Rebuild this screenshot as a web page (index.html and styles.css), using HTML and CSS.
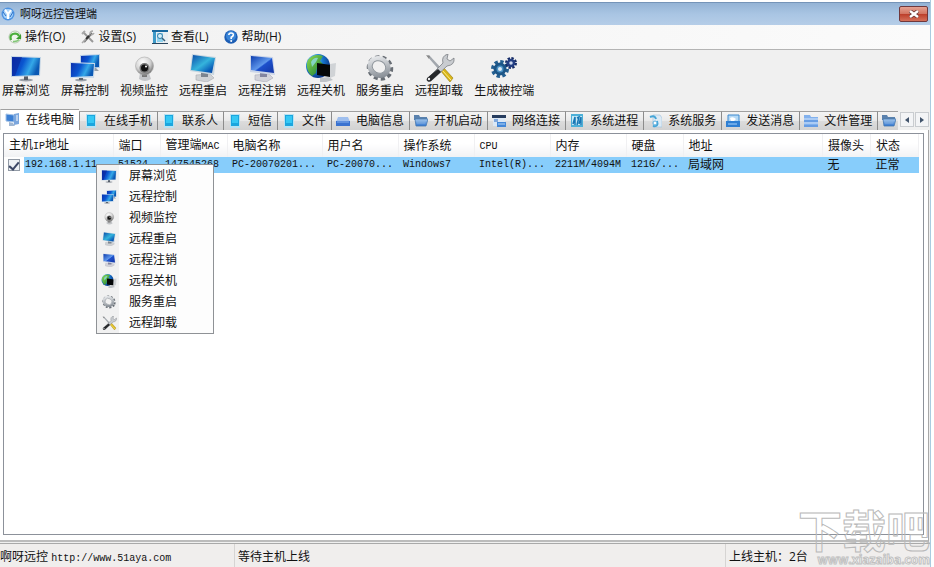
FILE: index.html
```html
<!DOCTYPE html>
<html lang="zh-CN">
<head>
<meta charset="utf-8">
<title>啊呀远控管理端</title>
<link rel="stylesheet" href="styles.css">
</head>
<body>
<svg class="defs" aria-hidden="true">
  <defs>
    <linearGradient id="screen" x1="0" y1="0" x2="1" y2="0.3">
      <stop offset="0" stop-color="#0b2fae"/><stop offset="0.45" stop-color="#0a56d0"/><stop offset="0.75" stop-color="#35a8e8"/><stop offset="1" stop-color="#0b59b4"/>
    </linearGradient>
    <linearGradient id="aqua" x1="0" y1="0" x2="1" y2="1">
      <stop offset="0" stop-color="#0a4aa8"/><stop offset="0.5" stop-color="#35b4dc"/><stop offset="0.8" stop-color="#0b60ba"/><stop offset="1" stop-color="#0a3d98"/>
    </linearGradient>
    <linearGradient id="royal" x1="0" y1="0" x2="1" y2="1">
      <stop offset="0" stop-color="#0c3cae"/><stop offset="0.5" stop-color="#5f98ec"/><stop offset="0.55" stop-color="#1d50cc"/><stop offset="1" stop-color="#1436a4"/>
    </linearGradient>
    <radialGradient id="ball" cx="0.4" cy="0.3" r="0.7">
      <stop offset="0" stop-color="#fff"/><stop offset="0.6" stop-color="#d4d4d4"/><stop offset="1" stop-color="#777"/>
    </radialGradient>
    <radialGradient id="earth" cx="0.3" cy="0.3" r="0.8">
      <stop offset="0" stop-color="#8be8f4"/><stop offset="0.5" stop-color="#1676cf"/><stop offset="1" stop-color="#0a2b79"/>
    </radialGradient>
    <linearGradient id="land" x1="0" y1="0" x2="1" y2="1">
      <stop offset="0" stop-color="#8fdc50"/><stop offset="1" stop-color="#167a35"/>
    </linearGradient>
    <linearGradient id="steel" x1="0" y1="0" x2="1" y2="1">
      <stop offset="0" stop-color="#eef0f2"/><stop offset="1" stop-color="#7f868e"/>
    </linearGradient>
    <linearGradient id="folder" x1="0" y1="0" x2="0" y2="1">
      <stop offset="0" stop-color="#a9cbf0"/><stop offset="1" stop-color="#2f74cf"/>
    </linearGradient>
    <symbol id="i-monitor" viewBox="0 0 32 28">
      <ellipse cx="16" cy="26" rx="7" ry="1.500" fill="#9aa0a8"/><path d="M14 22h4v4h-4z" fill="#555d68"/>
      <path d="M1 2 31 3 30 22 1 23z" fill="#c2d4e4"/><path d="M2 3 30 4 29 21 2 22z" fill="url(#screen)"/>
      <path d="M2 3h10L5 22H2z" fill="#0a259b" opacity=".6"/>
    </symbol>
    <symbol id="i-dual" viewBox="0 0 32 28">
      <path d="M11 1 31 0 31 14 11 15z" fill="#bfd4e8"/><path d="M12 2 30 1 30 13 12 14z" fill="url(#screen)"/><path d="M22 14h5l3 3h-8z" fill="#98a1ab"/>
      <ellipse cx="12" cy="26" rx="6" ry="1.500" fill="#9aa0a8"/><path d="M10 22h4v4h-4z" fill="#5b6470"/>
      <path d="M1 8 26 9 25 24 1 24z" fill="#cbdcec"/><path d="M2 9 25 10 24 22 2 23z" fill="url(#screen)"/>
    </symbol>
    <symbol id="i-webcam" viewBox="0 0 32 28">
      <path d="M12 19h9l2 6q-6 4-12 0z" fill="#c3c5c8"/><path d="M14 20h5v3h-5z" fill="#777"/>
      <circle cx="16.500" cy="12" r="9" fill="url(#ball)" stroke="#aaa" stroke-width=".6"/>
      <circle cx="16.500" cy="14" r="5" fill="#777"/><circle cx="16.500" cy="14" r="3.500" fill="#111"/><circle cx="18" cy="12.500" r="1" fill="#fff"/>
    </symbol>
    <symbol id="i-restart" viewBox="0 0 32 28">
      <path d="M9 21 23 20 27 24 20 28 9 26z" fill="#cfd2d5" stroke="#a8abb0" stroke-width=".6"/><path d="M14 18h7v5h-7z" fill="#7c858f"/>
      <path d="M5 0 29 3 27 21 3 17z" fill="#c8d6e0"/><path d="M6 1 28 4 25 19 4 16z" fill="url(#aqua)"/>
    </symbol>
    <symbol id="i-logoff" viewBox="0 0 32 28">
      <path d="M9 21 23 20 27 24 20 28 9 26z" fill="#d3d3da" stroke="#aaa9b8" stroke-width=".6"/><path d="M14 18h7v5h-7z" fill="#8385a0"/>
      <path d="M4 1 27 3 29 21 4 18z" fill="#ccd5e8"/><path d="M5 2 26 4 28 19 5 16z" fill="url(#royal)"/>
    </symbol>
    <symbol id="i-globe" viewBox="0 0 32 28">
      <circle cx="13" cy="12" r="12" fill="url(#earth)"/>
      <path d="M3 6Q9-1 18 2L15 7 18 10 12 13 11 19 7 22Q1 17 2 9z" fill="url(#land)"/><path d="M6 8Q9 3 13 4L11 8 7 13z" fill="#8fdbe4" opacity=".8"/>
      <path d="M12 9 26 11 25 23 12 21z" fill="#050708"/><path d="M25 10 31 9 30 22 25 24z" fill="#d0d3d6"/>
      <path d="M15 24 24 23 28 26 21 28 15 28z" fill="#bfc3c7"/>
    </symbol>
    <symbol id="i-gear" viewBox="0 0 32 28">
      <ellipse cx="16" cy="14" rx="11.500" ry="10.500" transform="rotate(30 16 14)" fill="none" stroke="#686e75" stroke-width="4" stroke-dasharray="4 2.900"/>
      <ellipse cx="15" cy="13" rx="9.500" ry="8.500" transform="rotate(30 15 13)" fill="none" stroke="url(#steel)" stroke-width="4.500"/>
      <ellipse cx="15" cy="13" rx="7" ry="6" transform="rotate(30 15 13)" fill="none" stroke="#8e959c" stroke-width="1"/>
    </symbol>
    <symbol id="i-tools" viewBox="0 0 32 28">
      <path d="M4 2 6 1 19 15 17 17z" fill="#a2a7ad"/><path d="M3 1 7 2 6 5z" fill="#888"/>
      <path d="M17 16 20 13 30 24 27 28z" fill="#d9b51a" stroke="#92780b" stroke-width=".6"/><path d="M19 16 28 26" stroke="#fff08a"/>
      <path d="M20 9Q18 2 25 0L24 5 27 7 31 4Q32 11 24 12L8 27Q4 29 4 25z" fill="#c9ccd0" stroke="#7b7f84" stroke-width=".8"/>
      <path d="M15 15 18 18 8 27Q3 29 4 24z" fill="#25272a"/><circle cx="6" cy="25" r="1.200" fill="#eee"/>
    </symbol>
    <symbol id="i-gears" viewBox="0 0 32 28">
      <circle cx="12" cy="15" r="7" fill="none" stroke="#245f91" stroke-width="4" stroke-dasharray="3.200 2.300"/><circle cx="12" cy="15" r="5" fill="#4b91c4" stroke="#1d5687" stroke-width="3"/><circle cx="12" cy="15" r="2" fill="#dcebf6"/>
      <circle cx="23" cy="9" r="4.500" fill="none" stroke="#172c66" stroke-width="3" stroke-dasharray="2.200 1.300"/><circle cx="23" cy="9" r="3" fill="#cdd9ef" stroke="#243f83" stroke-width="2.500"/>
    </symbol>
    <symbol id="i-app" viewBox="0 0 14 14">
      <circle cx="7" cy="7" r="6.500" fill="#4d93e2"/><circle cx="7" cy="7" r="5" fill="#a8d3fa"/><path d="M4 2.500 7 7 10 3M7 7v5" stroke="#fff" stroke-width="2" fill="none"/><path d="M2 5 5 9M12 5 9 10" stroke="#2d6fc4" fill="none"/>
    </symbol>
    <symbol id="i-refresh" viewBox="0 0 14 14">
      <circle cx="7" cy="7" r="6" fill="#eef5eb" stroke="#b7c9b1"/><path d="M3 10Q1 4 7 3.500 10 3.500 11 6" fill="none" stroke="#4bae3b" stroke-width="2.200"/><path d="M13 4v5H8z" fill="#3d9c31"/><path d="M5 11.500Q9 12 11 9.500" fill="none" stroke="#83c777" stroke-width="1.500"/>
    </symbol>
    <symbol id="i-wrench" viewBox="0 0 14 14">
      <path d="M2 2 12 12" stroke="#999" stroke-width="2"/><path d="M1 4 4 1" stroke="#aaa" stroke-width="2"/><path d="M3 12 11 3" stroke="#777" stroke-width="2"/><path d="M5 9 8 6" stroke="#333" stroke-width="2"/><path d="M9 4Q9 1 12 1M13 3Q12 5 10 5M1 13 5 9" stroke="#aaa" stroke-width="1.600" fill="none"/>
    </symbol>
    <symbol id="i-view" viewBox="0 0 16 14">
      <path d="M0 0h16v14H0z" fill="#e9eef2"/><path d="M0 0h16v2H0z" fill="#19689f"/><path d="M1 2h3v11H1z" fill="#3e9ac8"/><path d="M5 3h6v9H5z" fill="#8fd2ee"/><circle cx="8" cy="6" r="2.500" fill="#d5f1fa" stroke="#347ca8"/><path d="M10 8 13 11" stroke="#39607b" stroke-width="1.500"/><path d="M0 13h16v1H0z" fill="#28455d"/>
    </symbol>
    <symbol id="i-help" viewBox="0 0 14 14">
      <circle cx="7" cy="7" r="6.700" fill="#1d5eb4"/><circle cx="7" cy="6" r="5" fill="#3b86d8"/><path d="M4.800 5Q5 3 7 3 9.500 3 9.300 5 9 6.500 7.200 7.300V9" fill="none" stroke="#fff" stroke-width="1.600"/><circle cx="7.200" cy="11" r="1" fill="#fff"/>
    </symbol>
    <symbol id="i-pc" viewBox="0 0 16 14">
      <path d="M1 1 9 2 9 9 1 8z" fill="#3b7fd4" stroke="#a5c3e6"/><path d="M9 1 14 0 14 11 9 12z" fill="#7ba6dd"/><path d="M11 3h2M11 5h2M11 7h2" stroke="#fff"/><path d="M4 9 8 10 10 13 4 13z" fill="#9fb6d2"/>
    </symbol>
    <symbol id="i-phone" viewBox="0 0 14 14">
      <path d="M2 0h10v14H2z" fill="#b9e2f2"/><path d="M3 1h8v11H3z" fill="#1ba6de"/><path d="M4 2h6v7H4z" fill="#35c8f4"/>
    </symbol>
    <symbol id="i-drive" viewBox="0 0 14 14">
      <path d="M2 3h10l2 5H0z" fill="#9fbfee"/><path d="M0 7h14v5H0z" fill="#3a72d0"/><path d="M1 8h12" stroke="#86b1ee"/>
    </symbol>
    <symbol id="i-folder" viewBox="0 0 14 14">
      <path d="M0 3V1h5l1 2h7v3H0z" fill="#5a81ad"/><path d="M1 5h13l-2 7H2z" fill="url(#folder)" stroke="#4779ae" stroke-width=".8"/><path d="M3 7h8M3 9h8" stroke="#8db4df" stroke-width=".7"/>
    </symbol>
    <symbol id="i-window" viewBox="0 0 14 14">
      <path d="M0 1h14v3H0z" fill="#263c5e"/><path d="M1 4h12v8H1z" fill="#dbe8f6"/><path d="M2 5h4v3H2z" fill="#81a8dc"/><path d="M5 8h9v5H5z" fill="#4387d8"/><path d="M6 10h7" stroke="#b5d4f4"/>
    </symbol>
    <symbol id="i-process" viewBox="0 0 14 14">
      <path d="M1 0h12v13H1z" fill="#4cb0d8"/><path d="M2 2h10v9H2z" fill="#c8eaf7"/><path d="M3 10 5 3v8M7 4 9 3 7 11M9 10 11 3v8" stroke="#1677b5" stroke-width="1.500" fill="none"/>
    </symbol>
    <symbol id="i-service" viewBox="0 0 14 14">
      <path d="M5 1h7l2 3v9H5z" fill="#dceaf5" stroke="#a6c5df" stroke-width=".7"/><path d="M2 3Q7 1 8 5M9 7Q11 13 5 12" stroke="#45a5d7" stroke-width="2" fill="none"/><circle cx="7" cy="9" r="2" fill="#fff" stroke="#5caddc"/>
    </symbol>
    <symbol id="i-message" viewBox="0 0 14 14">
      <path d="M2 1h11v7H2z" fill="#b4d9f6" stroke="#3c8ad0"/><path d="M0 7h14v6H0z" fill="#2f7fd3"/><path d="M4 4Q7 2 10 5L8 7H5z" fill="#fff"/><path d="M2 10h9" stroke="#abd4fb"/>
    </symbol>
    <symbol id="i-files" viewBox="0 0 14 14">
      <path d="M0 1h6l1 2h7v4H0zM0 7h14v6H0z" fill="#82b1ed"/><path d="M0 5h14M0 9h14" stroke="#d4e6fc"/><path d="M0 7h14M0 12h14" stroke="#4f8ada"/>
    </symbol>
  </defs>
</svg>

<div class="window">
  <header class="titlebar">
    <svg class="icon-small"><use href="#i-app"/></svg>
    <h1 class="title">啊呀远控管理端</h1>
    <button class="close" type="button" aria-label="关闭"><svg class="close-mark" viewBox="0 0 10 8"><path d="M1 1 9 7M9 1 1 7" stroke="#6d3433" stroke-width="4"/><path d="M1 1 9 7M9 1 1 7" stroke="#fff" stroke-width="2.500"/></svg></button>
  </header>

  <nav class="menubar">
    <button type="button"><svg class="icon-small"><use href="#i-refresh"/></svg>操作(O)</button>
    <button type="button"><svg class="icon-small"><use href="#i-wrench"/></svg>设置(S)</button>
    <button type="button"><svg class="icon-wide"><use href="#i-view"/></svg>查看(L)</button>
    <button type="button"><svg class="icon-small"><use href="#i-help"/></svg>帮助(H)</button>
  </nav>

  <div class="toolbar">
    <button type="button"><svg><use href="#i-monitor"/></svg>屏幕浏览</button>
    <button type="button"><svg><use href="#i-dual"/></svg>屏幕控制</button>
    <button type="button"><svg><use href="#i-webcam"/></svg>视频监控</button>
    <button type="button"><svg><use href="#i-restart"/></svg>远程重启</button>
    <button type="button"><svg><use href="#i-logoff"/></svg>远程注销</button>
    <button type="button"><svg><use href="#i-globe"/></svg>远程关机</button>
    <button type="button"><svg><use href="#i-gear"/></svg>服务重启</button>
    <button type="button"><svg><use href="#i-tools"/></svg>远程卸载</button>
    <button type="button"><svg><use href="#i-gears"/></svg>生成被控端</button>
  </div>

  <div class="tabstrip">
    <div class="tabs">
      <button class="tab active" type="button"><svg class="icon-wide"><use href="#i-pc"/></svg>在线电脑</button>
      <button class="tab" type="button"><svg class="icon-small"><use href="#i-phone"/></svg>在线手机</button>
      <button class="tab" type="button"><svg class="icon-small"><use href="#i-phone"/></svg>联系人</button>
      <button class="tab" type="button"><svg class="icon-small"><use href="#i-phone"/></svg>短信</button>
      <button class="tab" type="button"><svg class="icon-small"><use href="#i-phone"/></svg>文件</button>
      <button class="tab" type="button"><svg class="icon-small"><use href="#i-drive"/></svg>电脑信息</button>
      <button class="tab" type="button"><svg class="icon-small"><use href="#i-folder"/></svg>开机启动</button>
      <button class="tab" type="button"><svg class="icon-small"><use href="#i-window"/></svg>网络连接</button>
      <button class="tab" type="button"><svg class="icon-small"><use href="#i-process"/></svg>系统进程</button>
      <button class="tab" type="button"><svg class="icon-small"><use href="#i-service"/></svg>系统服务</button>
      <button class="tab" type="button"><svg class="icon-small"><use href="#i-message"/></svg>发送消息</button>
      <button class="tab" type="button"><svg class="icon-small"><use href="#i-files"/></svg>文件管理</button>
      <button class="tab" type="button" aria-label="更多"><svg class="icon-small"><use href="#i-folder"/></svg></button>
    </div>
    <div class="scrollers">
      <button type="button" aria-label="向左"><svg viewBox="0 0 4 6"><path d="M4 0v6L0 3z"/></svg></button>
      <button type="button" aria-label="向右"><svg viewBox="0 0 4 6"><path d="M0 0v6l4-3z"/></svg></button>
    </div>
  </div>

  <main class="page">
    <div class="list">
      <table class="hosts">
        <colgroup>
          <col class="c-ip"><col class="c-port"><col class="c-mac"><col class="c-name"><col class="c-user"><col class="c-os">
          <col class="c-cpu"><col class="c-mem"><col class="c-disk"><col><col class="c-cam"><col class="c-state">
        </colgroup>
        <thead>
          <tr><th>主机<span class="mono">IP</span>地址</th><th>端口</th><th>管理端<span class="mono">MAC</span></th><th>电脑名称</th><th>用户名</th><th>操作系统</th><th><span class="mono">CPU</span></th><th>内存</th><th>硬盘</th><th>地址</th><th>摄像头</th><th>状态</th></tr>
        </thead>
        <tbody>
          <tr>
            <td class="mono first"><label class="pick"><input type="checkbox" checked><span>192.168.1.11</span></label></td>
            <td class="mono">51524</td><td class="mono">147545268</td><td class="mono">PC-20070201...</td><td class="mono">PC-20070...</td><td class="mono">Windows7</td><td class="mono">Intel(R)...</td><td class="mono">2211M/4094M</td><td class="mono">121G/...</td><td>局域网</td><td>无</td><td>正常</td>
          </tr>
        </tbody>
      </table>
      <div class="context">
        <button type="button"><svg><use href="#i-monitor"/></svg>屏幕浏览</button>
        <button type="button"><svg><use href="#i-dual"/></svg>远程控制</button>
        <button type="button"><svg><use href="#i-webcam"/></svg>视频监控</button>
        <button type="button"><svg><use href="#i-restart"/></svg>远程重启</button>
        <button type="button"><svg><use href="#i-logoff"/></svg>远程注销</button>
        <button type="button"><svg><use href="#i-globe"/></svg>远程关机</button>
        <button type="button"><svg><use href="#i-gear"/></svg>服务重启</button>
        <button type="button"><svg><use href="#i-tools"/></svg>远程卸载</button>
      </div>
    </div>
  </main>

  <footer class="status">
    <div>啊呀远控 <a class="mono" href="http://www.51aya.com">http://www.51aya.com</a></div>
    <div>等待主机上线</div>
    <div>上线主机：2台</div>
  </footer>
  <div class="watermark"><span class="mark-name">下载吧</span><span class="mark-url">www.xiazaiba.com</span></div>
</div>
</body>
</html>
```
FILE: styles.css
```css
* { box-sizing: border-box; }

body {
  margin: 0;
  background: #fff;
  color: #111;
  font: 12px/16px "Open Sans", "Noto Sans CJK SC", sans-serif;
}

button {
  display: flex;
  align-items: center;
  padding: 0;
  border: 0;
  background: none;
  color: inherit;
  font: inherit;
  white-space: nowrap;
}

svg { display: block; flex: none; }
.defs { position: absolute; width: 0; height: 0; }
.icon-small { width: 14px; height: 14px; }
.icon-wide { width: 16px; height: 14px; }
.mono { font-family: "Liberation Mono", "Noto Sans CJK SC", monospace; font-size: 10px; }

.window {
  position: relative;
  display: flex;
  flex-direction: column;
  height: 100vh;
  margin-right: 3px;
  padding-top: 2px;
  overflow: hidden;
  border-right: 1px solid #a9cbe0;
  background: #f0f0f0;
  background-clip: content-box;
}

.titlebar {
  display: flex;
  align-items: center;
  height: 23px;
  flex: none;
  padding: 0 2px 0 1px;
  gap: 5px;
  border-top: 1px solid #7594b8;
  background: linear-gradient(#94b3d5, #a9c5e3 50%, #b5cde8);
}
.title { flex: 1; margin: 0; font-size: 11px; font-weight: 400; }
.close {
  justify-content: center;
  width: 29px;
  height: 16px;
  border: 1px solid #70383c;
  border-radius: 2px;
  background: linear-gradient(#e6a292, #d27562 48%, #bd3f2b 52%, #d4705a);
}
.close-mark { width: 10px; height: 8px; }

.menubar {
  display: flex;
  flex: none;
  height: 25px;
  padding-left: 8px;
  gap: 16px;
  border-bottom: 1px solid #b4b4b4;
  background: linear-gradient(90deg, #f1f1f1, #fbfbfb);
}
.menubar button { gap: 3px; }

.toolbar {
  display: flex;
  flex: none;
  height: 59px;
  padding: 4px 0 0 2px;
  gap: 11px;
}
.toolbar button { flex-direction: column; gap: 1px; align-self: flex-start; }
.toolbar svg { width: 32px; height: 28px; }

.tabstrip { display: flex; flex: none; height: 21px; padding-right: 1px; }
.tabs { display: flex; flex: 1; min-width: 0; align-items: flex-end; overflow: hidden; }
.tab {
  flex: none;
  height: 19px;
  padding: 0 5px 0 4px;
  gap: 6px;
  border-left: 1px solid #8c8c8c;
  border-top: 1px solid #a0a0a0;
  background: linear-gradient(#f4f4f4, #e9e9e9 48%, #dcdcdc 52%, #d2d2d2);
}
.tab.active { height: 21px; gap: 5px; background: #fff; border-left-color: #ddd; }
.scrollers { display: flex; flex: none; gap: 1px; padding: 3px 0 3px 2px; }
.scrollers button { justify-content: center; width: 14px; border: 1px solid #c9ccd0; background: #f3f4f6; }
.scrollers svg { width: 4px; height: 6px; fill: #41536b; }

.page {
  display: flex;
  flex: 1;
  min-height: 0;
  margin-right: 1px;
  padding: 3px 4px 5px 3px;
  border-right: 1px solid #a8a8a8;
  border-bottom: 2px solid #bcbcbc;
  background: #fff;
}
.list {
  position: relative;
  flex: 1;
  min-width: 0;
  padding-right: 4px;
  border: 1px solid #8c919a;
}
.hosts { width: 100%; table-layout: fixed; border-collapse: collapse; }
.c-ip { width: 109px; }
.c-port { width: 47px; }
.c-mac { width: 67px; }
.c-name { width: 95px; }
.c-user, .c-os, .c-cpu, .c-mem { width: 76px; }
.c-disk { width: 57px; }
.c-cam, .c-state { width: 48px; }
th, td { padding: 0 0 0 5px; overflow: hidden; text-align: left; font-weight: 400; white-space: nowrap; }
th { height: 23px; background: linear-gradient(#fff 40%, #f1f2f4); border-right: 1px solid #f0f0f2; }
td { height: 16px; background: #87cdfb; }
td.first { padding: 0; background: linear-gradient(90deg, #fff 20px, #87cdfb 20px); }
.pick { display: flex; align-items: center; padding-left: 4px; gap: 5px; }
.pick input {
  display: flex;
  justify-content: center;
  width: 12px;
  height: 12px;
  margin: 0;
  appearance: none;
  border: 1px solid #929aa5;
  background: #eef1f5;
}
.pick input:checked::before {
  content: "";
  width: 4px;
  height: 8px;
  border: solid #3c4766;
  border-width: 0 2px 2px 0;
  transform: rotate(40deg);
}

.context {
  position: absolute;
  top: 30px;
  left: 92px;
  width: 118px;
  padding: 0;
  border: 1px solid #8f9296;
  background: linear-gradient(90deg, #f1f1f1 22px, #fdfdfd 22px);
}
.context button { width: 100%; height: 21px; padding-left: 4px; gap: 12px; }
.context svg { width: 16px; height: 14px; }

.status {
  display: grid;
  grid-template-columns: 234px 1fr 205px;
  flex: none;
  height: 24px;
  margin-top: 1px;
  background: #f0eeed;
  border-top: 1px solid #a9a9a9;
  line-height: 26px;
}
.status div + div { padding-left: 3px; border-left: 1px solid #d6d4d3; }
.status a { color: inherit; text-decoration: none; }

.watermark {
  position: absolute;
  right: 0;
  bottom: 0;
  display: flex;
  flex-direction: column;
  align-items: flex-end;
  color: transparent;
  font-family: "Open Sans", "Noto Sans CJK SC", sans-serif;
  font-weight: 700;
  pointer-events: none;
}
.mark-name { font-size: 44px; line-height: 44px; -webkit-text-stroke: 1px #b9b9b9; }
.mark-url { color: #fff; font-size: 12px; line-height: 14px; -webkit-text-stroke: 1px #c0c0c0; }
```
